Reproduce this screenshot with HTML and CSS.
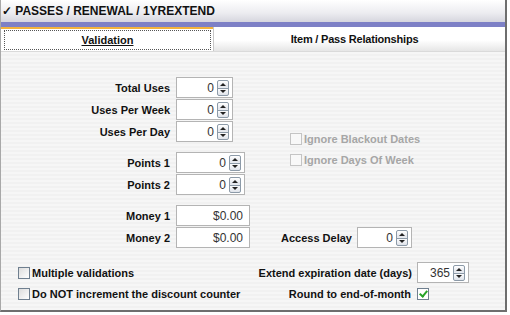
FILE: index.html
```html
<!DOCTYPE html>
<html lang="en">
<head>
    <meta charset="UTF-8">
    <title>Passes / Renewal / 1YREXTEND</title>
    <link rel="stylesheet" href="styles.css">
</head>
<body>
    <div class="frame">
        <div class="title-bar">&#10003; PASSES / RENEWAL / 1YREXTEND</div>
        <div class="band"></div>
        <div class="tabs">
            <div class="tab active"><span class="focus">Validation</span></div>
            <div class="tab">Item / Pass Relationships</div>
        </div>
        <div class="panel">
            <div class="top">
                <div class="fields">
                    <div class="row">
                        <label class="lbl">Total Uses</label>
                        <div class="input w56"><span>0</span><i class="spin"></i></div>
                    </div>
                    <div class="row">
                        <label class="lbl">Uses Per Week</label>
                        <div class="input w56"><span>0</span><i class="spin"></i></div>
                    </div>
                    <div class="row">
                        <label class="lbl">Uses Per Day</label>
                        <div class="input w56"><span>0</span><i class="spin"></i></div>
                    </div>

                    <div class="row group">
                        <label class="lbl">Points 1</label>
                        <div class="input w68"><span>0</span><i class="spin"></i></div>
                    </div>
                    <div class="row">
                        <label class="lbl">Points 2</label>
                        <div class="input w68"><span>0</span><i class="spin"></i></div>
                    </div>

                    <div class="row group">
                        <label class="lbl">Money 1</label>
                        <div class="input w72"><span>$0.00</span></div>
                    </div>
                    <div class="row">
                        <label class="lbl">Money 2</label>
                        <div class="input w72"><span>$0.00</span></div>
                        <label class="lbl-inline delay">Access Delay</label>
                        <div class="input w54"><span>0</span><i class="spin"></i></div>
                    </div>
                </div>
                <div class="options">
                    <div class="check disabled"><i class="box"></i>Ignore Blackout Dates</div>
                    <div class="check disabled"><i class="box"></i>Ignore Days Of Week</div>
                </div>
            </div>

            <div class="bottom">
                <div class="check"><i class="box"></i>Multiple validations</div>
                <div class="right-row">
                    <label class="lbl-inline">Extend expiration date (days)</label>
                    <div class="input w51"><span>365</span><i class="spin"></i></div>
                </div>
                <div class="check"><i class="box"></i>Do NOT increment the discount counter</div>
                <div class="right-row round">
                    <label class="lbl-inline">Round to end-of-month</label>
                    <i class="box checked"></i>
                </div>
            </div>
        </div>
    </div>
</body>
</html>
```

FILE: styles.css
```css
body {
    margin: 0;
    padding: 0;
    background-color: #ffffff;
    font-family: "Liberation Sans", Arial, sans-serif;
    color: #111;
}
.frame {
    width: 504px;
    height: 310px;
    border-left: 1px solid #a8a8a8;
    border-right: 2px solid #6e6e6e;
    border-bottom: 2px solid #6e6e6e;
    display: flex;
    flex-direction: column;
    overflow: hidden;
}
.title-bar {
    height: 22px;
    line-height: 22px;
    padding-left: 1px;
    font-size: 12px;
    font-weight: bold;
    background: linear-gradient(#ffffff, #ececf0 60%, #d6d6de);
    white-space: nowrap;
}
.band {
    height: 5px;
    background-color: #7d80c6;
}
.tabs {
    display: flex;
    height: 24px;
    border-bottom: 1px solid #dadada;
}
.tab {
    flex: 1;
    display: flex;
    align-items: center;
    justify-content: center;
    font-size: 11px;
    font-weight: bold;
    letter-spacing: -0.2px;
    background: linear-gradient(#ffffff, #ffffff 55%, #e6e6e6);
    border-left: 1px solid #c8c8c8;
    padding-right: 10px;
}
.tab.active {
    flex: 0 0 212px;
    box-sizing: border-box;
    border-left: none;
    border-top: 2px solid #f2b33d;
    background: #ffffff;
    padding: 1px 2px 1px 3px;
    letter-spacing: 0;
}
.focus {
    flex: 1;
    align-self: stretch;
    display: flex;
    align-items: center;
    justify-content: center;
    border: 1px dotted #555;
    text-decoration: underline;
}
.panel {
    flex: 1;
    padding-top: 25px;
    background: repeating-linear-gradient(#f6f6f6 0, #f6f6f6 2px, #f1f1f1 2px, #f1f1f1 4px);
}
.top {
    display: flex;
}
.fields {
    flex: 0 0 250px;
    min-width: 0;
    display: flex;
    flex-direction: column;
    gap: 1px;
}
.row {
    display: flex;
    align-items: center;
    height: 21px;
}
.row.group {
    margin-top: 9px;
}
.lbl {
    flex: 0 0 169px;
    margin-right: 6px;
    text-align: right;
    font-size: 11px;
    font-weight: bold;
}
.lbl-inline {
    font-size: 11px;
    font-weight: bold;
    margin-right: 5px;
    white-space: nowrap;
}
.delay {
    margin-left: 31px;
}
.input {
    flex: none;
    height: 19px;
    border: 1px solid #b4b4b4;
    background: #ffffff;
    display: flex;
    align-items: center;
    justify-content: flex-end;
    padding-right: 3px;
    font-size: 12px;
    color: #333;
    box-sizing: content-box;
}
.input span {
    padding-right: 3px;
}
.w56 { width: 52px; }
.w68 { width: 64px; }
.w72 { width: 69px; }
.w54 { width: 50px; }
.w51 { width: 47px; }

/* spinner buttons */
.spin {
    width: 12px;
    height: 16px;
    border: 1px solid #8c9aa8;
    border-radius: 2px;
    box-sizing: border-box;
    background:
        linear-gradient(#8c9aa8, #8c9aa8) 0 7px / 100% 1px no-repeat,
        linear-gradient(#ffffff, #dfe3ea 45%, #ffffff 50%, #dfe3ea);
    position: relative;
}
.spin::before,
.spin::after {
    content: "";
    position: absolute;
    left: 2px;
    border-left: 3px solid transparent;
    border-right: 3px solid transparent;
}
.spin::before {
    top: 2px;
    border-bottom: 3px solid #222;
}
.spin::after {
    top: 9px;
    border-top: 3px solid #222;
}

.options {
    margin-left: 39px;
    padding-top: 56px;
    display: flex;
    flex-direction: column;
    gap: 9px;
}
.check {
    display: flex;
    align-items: center;
    font-size: 11px;
    font-weight: bold;
    white-space: nowrap;
}
.check.disabled {
    color: #a6a6a6;
}
.box {
    width: 12px;
    height: 12px;
    box-sizing: border-box;
    border: 1px solid #6f7f8f;
    background: linear-gradient(135deg, #dcdcdc, #ffffff);
    margin-right: 2px;
    display: inline-block;
}
.disabled .box {
    border-color: #c4c4c4;
    background: #f8f8f8;
}
.box.checked {
    margin: 0 0 0 1px;
    background: #ffffff;
    border-color: #6f7f8f;
    position: relative;
}
.box.checked::after {
    content: "";
    position: absolute;
    left: 3px;
    top: 0px;
    width: 3px;
    height: 6px;
    border-right: 2px solid #27a327;
    border-bottom: 2px solid #27a327;
    transform: rotate(40deg);
}
.bottom {
    margin-top: 14px;
    display: grid;
    grid-template-columns: 250px 201px;
    grid-auto-rows: 21px;
    padding-left: 17px;
    align-items: center;
}
.right-row {
    display: flex;
    align-items: center;
    justify-content: flex-end;
}
.right-row.round {
    padding-right: 40px;
}
```
